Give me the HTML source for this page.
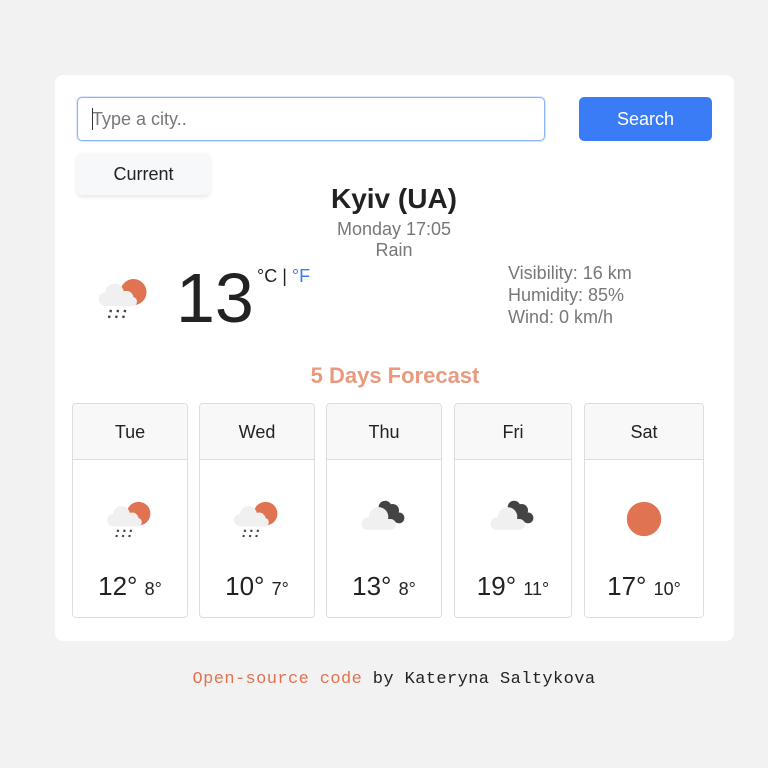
<!DOCTYPE html>
<html><head><style>
*{margin:0;padding:0;box-sizing:border-box}
body{width:768px;height:768px;background:#f2f2f2;font-family:"Liberation Sans",sans-serif;position:relative;overflow:hidden}
.a{position:absolute}
.main{left:55px;top:75px;width:679px;height:566px;background:#fff;border-radius:8px}
.inp{left:77px;top:97px;width:468px;height:44px;border:1px solid #8ab4f8;border-radius:5px;font-size:18px;color:#777;padding:11px 14px;box-shadow:0 0 0 1px rgba(138,180,248,.3)}
.cur{left:92px;top:108px;width:1px;height:22px;background:#333}
.btn{left:579px;top:97px;width:133px;height:44px;background:#3a7cf5;border-radius:5px;color:#fff;font-size:18px;text-align:center;line-height:44px}
.cbtn{left:77px;top:153px;width:133px;height:42px;background:#f7f8fa;border-radius:5px;box-shadow:0 2px 4px rgba(0,0,0,.1);font-size:18px;color:#222;text-align:center;line-height:42px}
.c{text-align:center;width:100%;left:0}
.card{top:403px;height:215px;border:1px solid #ddd;border-radius:4px;overflow:hidden;background:#fff}
.card .h{height:56px;background:#f8f8f8;border-bottom:1px solid #ddd;text-align:center;line-height:56px;font-size:18px;color:#222}
.card svg{position:absolute;left:50%;top:88px;margin-left:-29px}
.card .t{position:absolute;width:100%;top:167px;text-align:center;color:#222;font-size:26px}
.card .t span{font-size:18px}
</style></head><body>
<svg width="0" height="0" style="position:absolute"><defs>
<g id="rain"><circle cx="35" cy="20" r="11" fill="#e07352"/><g fill="#f0f0f0"><circle cx="19" cy="21" r="8"/><circle cx="29" cy="25" r="6"/><circle cx="11" cy="26" r="5.5"/><rect x="9" y="24" width="29" height="8" rx="4"/></g><g stroke="#444" stroke-width="2" stroke-dasharray="2 3"><line x1="16" y1="35" x2="14" y2="43"/><line x1="22" y1="35" x2="20" y2="43"/><line x1="28" y1="35" x2="26" y2="43"/></g></g>
<g id="cloud"><g fill="#444"><circle cx="28" cy="14" r="6"/><circle cx="35" cy="17" r="6"/><circle cx="41" cy="24" r="5"/><circle cx="33" cy="23" r="5"/></g><g fill="#f0f0f0"><circle cx="22" cy="23" r="9"/><circle cx="12" cy="29" r="5.5"/><rect x="6" y="25" width="32" height="10" rx="5"/></g></g>
</defs></svg>
<div class="a main"></div>
<div class="a inp">Type a city..</div>
<div class="a cur"></div>
<div class="a btn">Search</div>
<div class="a cbtn">Current</div>
<div class="a c" style="top:183px;font-size:28px;font-weight:bold;color:#222;left:10px">Kyiv (UA)</div>
<div class="a c" style="top:219px;font-size:18px;color:#777;left:10px">Monday 17:05</div>
<div class="a c" style="top:240px;font-size:18px;color:#777;left:10px">Rain</div>
<svg class="a" style="left:92px;top:268px" width="64" height="60" viewBox="0 0 54 50"><use href="#rain"/></svg>
<div class="a" style="left:176px;top:258px;font-size:70px;color:#222">13</div>
<div class="a" style="left:257px;top:266px;font-size:18px;color:#222">°C | <span style="color:#3a7cf5">°F</span></div>
<div class="a" style="left:508px;top:262px;font-size:18px;color:#777;line-height:22px">Visibility: 16 km<br>Humidity: 85%<br>Wind: 0 km/h</div>
<div class="a c" style="top:363px;font-size:22px;font-weight:bold;color:#e99a7e;left:11px">5 Days Forecast</div>
<div class="a card" style="left:72px;width:116px"><div class="h">Tue</div><svg width="58" height="54" viewBox="0 0 54 50"><use href="#rain"/></svg><div class="t">12° <span>8°</span></div></div>
<div class="a card" style="left:199px;width:116px"><div class="h">Wed</div><svg width="58" height="54" viewBox="0 0 54 50"><use href="#rain"/></svg><div class="t">10° <span>7°</span></div></div>
<div class="a card" style="left:326px;width:116px"><div class="h">Thu</div><svg width="58" height="54" viewBox="0 0 54 50"><use href="#cloud"/></svg><div class="t">13° <span>8°</span></div></div>
<div class="a card" style="left:454px;width:118px"><div class="h">Fri</div><svg width="58" height="54" viewBox="0 0 54 50"><use href="#cloud"/></svg><div class="t">19° <span>11°</span></div></div>
<div class="a card" style="left:584px;width:120px"><div class="h">Sat</div><svg width="58" height="54" viewBox="0 0 54 50"><circle cx="27" cy="25" r="16" fill="#e07352"/></svg><div class="t">17° <span>10°</span></div></div>
<div class="a c" style="top:670px;font-family:'Liberation Mono',monospace;font-size:17px;letter-spacing:0.4px;color:#222;left:10px"><span style="color:#e07352">Open-source code</span> by Kateryna Saltykova</div>
</body></html>
